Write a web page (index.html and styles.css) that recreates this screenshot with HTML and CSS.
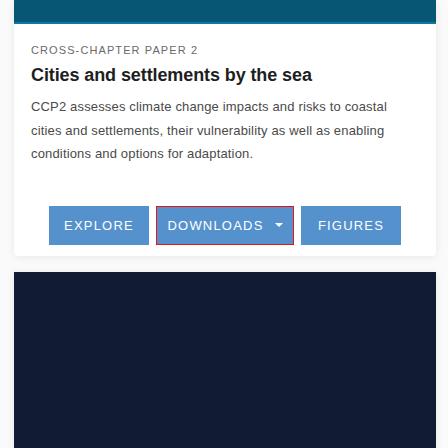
FILE: index.html
```html
<!DOCTYPE html>
<html>
<head>
<meta charset="utf-8">
<link rel="stylesheet" href="styles.css">
</head>
<body>
<div class="page">
  <div class="card">
    <div class="card-top"></div>
    <div class="card-body">
      <div class="eyebrow">CROSS-CHAPTER PAPER 2</div>
      <h1 class="title">Cities and settlements by the sea</h1>
      <p class="desc">CCP2 assesses climate change impacts and risks to coastal cities and settlements, their vulnerability as well as enabling conditions and options for adaptation.</p>
      <div class="actions">
        <a class="btn">EXPLORE</a>
        <a class="btn btn-focus">DOWNLOADS <span class="caret"></span></a>
        <a class="btn">FIGURES</a>
      </div>
    </div>
  </div>
  <div class="media"></div>
</div>
</body>
</html>
```
FILE: styles.css
```css
html, body { margin: 0; padding: 0; }
body {
  background: #fafafa;
  font-family: "Liberation Sans", Arial, sans-serif;
  width: 448px;
  height: 448px;
  overflow: hidden;
}
.page {
  padding: 0 12px 0 14px;
  display: flex;
  flex-direction: column;
  gap: 16px;
}
.card {
  background: #fff;
  border-radius: 0 0 4px 4px;
  box-shadow: 0 1px 8px rgba(0,0,0,0.08);
  width: 422px;
}
.card-top {
  height: 22px;
  background: #065674;
  border-bottom: 2px solid #0b78a5;
}
.card-body {
  padding: 19px 20px 11px 17px;
}
.eyebrow {
  font-size: 11px;
  letter-spacing: 1.1px;
  color: #6a6a6a;
  line-height: 14px;
}
.title {
  margin: 7px 0 0 0;
  font-size: 18px;
  letter-spacing: -0.1px;
  font-weight: bold;
  color: #1e1e1e;
  line-height: 23px;
}
.desc {
  margin: 8px 0 0 0;
  font-size: 13px;
  letter-spacing: 0.16px;
  line-height: 23.5px;
  color: #4a4a4a;
}
.actions {
  display: flex;
  justify-content: center;
  gap: 7px;
  margin: 40px -3px 0 0;
}
.btn {
  display: flex;
  align-items: center;
  justify-content: center;
  width: 100px;
  height: 39px;
  background: #5592cd;
  color: #fff;
  font-size: 13px;
  letter-spacing: 1.2px;
  box-sizing: border-box;
}
.btn-focus {
  width: 138px;
  border: 1px solid #ee1111;
  gap: 9px;
}
.caret {
  width: 0;
  height: 0;
  border-left: 4px solid transparent;
  border-right: 4px solid transparent;
  border-top: 4px solid #fff;
  margin-left: 2px;
}
.media {
  width: 422px;
  height: 177px;
  background: #111b33;
  box-shadow: 0 1px 8px rgba(0,0,0,0.08);
}
```
